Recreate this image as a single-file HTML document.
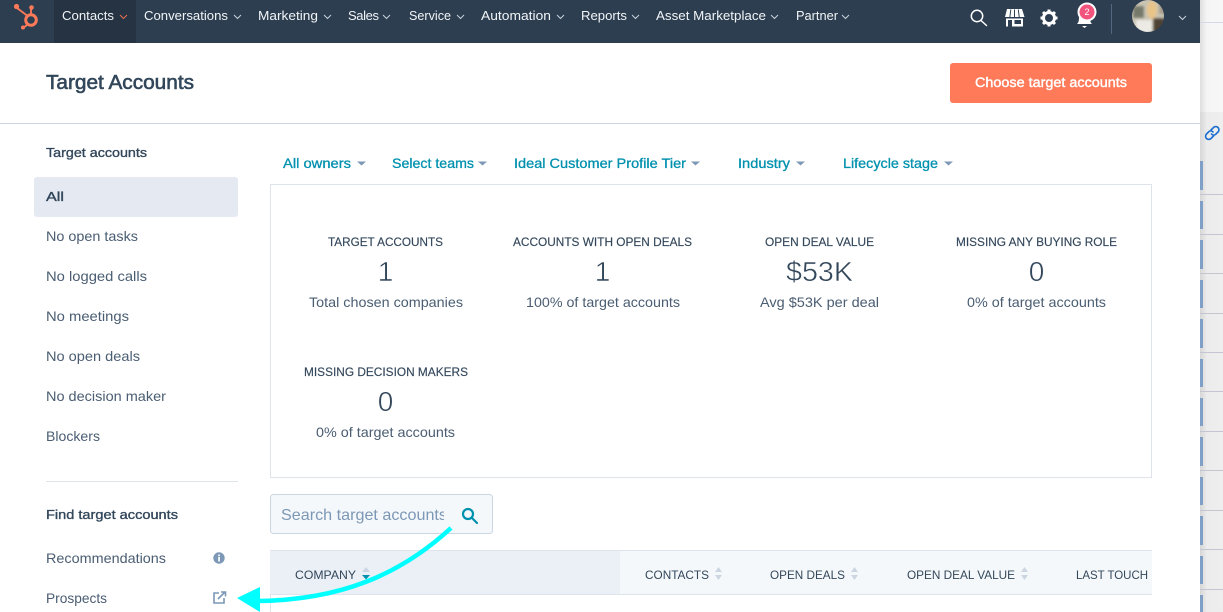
<!DOCTYPE html>
<html><head><meta charset="utf-8"><title>Target Accounts</title>
<style>
html,body{margin:0;padding:0;background:#fff;width:1223px;height:612px;overflow:hidden}
svg{display:block;position:absolute;left:0;top:0}
text{font-family:"Liberation Sans",sans-serif}
.n{fill:#f1f4f7;font-size:13px}
.c{fill:none;stroke:#c8d2dc;stroke-width:1}
.s{fill:#4a5d72;font-size:14px}
.h{fill:#33475b;font-size:13px;stroke:#33475b;stroke-width:.35}
.f{fill:#0091ae;font-size:14px;stroke:#0091ae;stroke-width:.3}
.t{fill:#33475b;font-size:12px;stroke:#33475b;stroke-width:.15}
.m{fill:#33475b;font-size:28px;text-anchor:middle;stroke:#fff;stroke-width:.5}
.d{fill:#4a5d72;font-size:14px}
.th{fill:#33475b;font-size:12px}
</style></head><body>
<svg width="1223" height="612" viewBox="0 0 1223 612" xmlns="http://www.w3.org/2000/svg">
<defs>
<linearGradient id="sh" x1="0" x2="1" y1="0" y2="0"><stop offset="0" stop-color="#d6d6d6"/><stop offset=".3" stop-color="#ececec"/><stop offset="1" stop-color="#eeeeee"/></linearGradient>
<linearGradient id="sh2" x1="0" x2="1" y1="0" y2="0"><stop offset="0" stop-color="#dedede"/><stop offset=".3" stop-color="#f5f5f5"/><stop offset="1" stop-color="#f7f7f7"/></linearGradient>
<filter id="bl" x="-10%" y="-10%" width="120%" height="120%"><feGaussianBlur stdDeviation="1.200"/></filter>
<clipPath id="av"><circle cx="1148" cy="16" r="16"/></clipPath>
<clipPath id="sc"><rect x="270" y="494" width="174" height="40"/></clipPath>
</defs>
<rect width="1223" height="612" fill="#fff"/>
<!-- right strip -->
<rect x="1200" y="0" width="23" height="612" fill="url(#sh)"/>
<rect x="1200" y="0" width="23" height="112" fill="url(#sh2)"/>
<rect x="1200" y="22" width="23" height="1" fill="#d3d9e6"/>
<rect x="1200" y="113" width="23" height="44" fill="url(#sh)"/>
<g fill="#c5c5d2"><rect x="1200" y="194" width="23" height="1"/><rect x="1200" y="234" width="23" height="1"/><rect x="1200" y="273" width="23" height="1"/><rect x="1200" y="313" width="23" height="1"/><rect x="1200" y="352" width="23" height="1"/><rect x="1200" y="391" width="23" height="1"/><rect x="1200" y="431" width="23" height="1"/><rect x="1200" y="470" width="23" height="1"/><rect x="1200" y="510" width="23" height="1"/><rect x="1200" y="549" width="23" height="1"/><rect x="1200" y="589" width="23" height="1"/></g>
<g fill="#7f9fc6"><rect x="1200" y="161" width="3" height="29"/><rect x="1200" y="201" width="3" height="28"/><rect x="1200" y="240" width="3" height="29"/><rect x="1200" y="280" width="3" height="28"/><rect x="1200" y="319" width="3" height="29"/><rect x="1200" y="359" width="3" height="28"/><rect x="1200" y="398" width="3" height="28"/><rect x="1200" y="437" width="3" height="29"/><rect x="1200" y="477" width="3" height="28"/><rect x="1200" y="516" width="3" height="29"/><rect x="1200" y="556" width="3" height="28"/><rect x="1200" y="595" width="3" height="17"/></g>
<g fill="none" stroke="#1a6fd0" stroke-width="1.600" stroke-linecap="round"><path d="M1211 130l2.500-2.500a3 3 0 0 1 4.500 4.500l-2.500 2.500a3 3 0 0 1-4-.5"/><path d="M1213.500 136l-2.500 2.500a3 3 0 0 1-4.500-4.500l2.500-2.500a3 3 0 0 1 4 .5"/></g>
<!-- nav -->
<rect width="1200" height="43" fill="#2d3e50"/>
<rect x="54" width="82" height="43" fill="#253342"/>
<g stroke="#ff7a59" fill="#ff7a59">
<circle cx="31" cy="20" r="5.300" fill="none" stroke-width="3"/>
<path d="M31 8v6M17 8l10 7.500M27 25l-4 3" stroke-width="1.800" fill="none"/>
<circle cx="31.500" cy="7.500" r="2.300" stroke="none"/><circle cx="16.500" cy="6.500" r="2.600" stroke="none"/><circle cx="23" cy="27.500" r="2" stroke="none"/></g>
<text class="n" x="62" y="20" textLength="52" lengthAdjust="spacingAndGlyphs">Contacts</text>
<text class="n" x="144" y="20" textLength="84" lengthAdjust="spacingAndGlyphs">Conversations</text>
<text class="n" x="258" y="20" textLength="60" lengthAdjust="spacingAndGlyphs">Marketing</text>
<text class="n" x="348" y="20" textLength="31" lengthAdjust="spacing">Sales</text>
<text class="n" x="409" y="20" textLength="42" lengthAdjust="spacingAndGlyphs">Service</text>
<text class="n" x="481" y="20" textLength="70" lengthAdjust="spacingAndGlyphs">Automation</text>
<text class="n" x="581" y="20" textLength="46" lengthAdjust="spacingAndGlyphs">Reports</text>
<text class="n" x="656" y="20" textLength="110" lengthAdjust="spacingAndGlyphs">Asset Marketplace</text>
<text class="n" x="796" y="20" textLength="42" lengthAdjust="spacingAndGlyphs">Partner</text>
<path d="M120 15l3.500 3.500 3.500-3.500" fill="none" stroke="#e66e50"/>
<path class="c" d="M234 15l3.500 3.500 3.500-3.500M324 15l3.500 3.500 3.500-3.500M383 15l3.500 3.500 3.500-3.500M457 15l3.500 3.500 3.500-3.500M557 15l3.500 3.500 3.500-3.500M632 15l3.500 3.500 3.500-3.500M771 15l3.500 3.500 3.500-3.500M842 15l3.500 3.500 3.500-3.500M1179 16l3.500 3.500 3.500-3.500"/>
<!-- top right icons -->
<g fill="none" stroke="#fff" stroke-width="1.500"><circle cx="977" cy="16" r="5.700"/><path d="M981 20.500l5.500 5" stroke-linecap="round"/></g>
<g fill="#fff"><path d="M1007 9h15l2.500 8h-19.500z"/><path d="M1006 18.500h17v8h-17z"/></g>
<path d="M1010.800 9.500l-1 8M1014.500 9.500v8M1018.300 9.500l1 8" stroke="#2d3e50" stroke-width="1" fill="none"/>
<rect x="1008" y="20" width="4" height="6.500" fill="#2d3e50"/><rect x="1014.500" y="20" width="6.500" height="4" fill="#2d3e50"/>
<g fill="none" stroke="#fff"><circle cx="1049" cy="18" r="5.500" stroke-width="3"/><path d="M1049 9.500v3M1049 23.500v3M1040.500 18h3M1054.500 18h3M1043 12l2 2M1053 22l2 2M1055 12l-2 2M1045 22l-2 2" stroke-width="3"/></g>
<path d="M1077 24c2-2 2-4 2-8a5.500 5.500 0 0 1 11 0c0 4 0 6 2 8z" fill="#fff"/><path d="M1082 26h5l-2.500 2z" fill="#fff"/>
<circle cx="1087" cy="12" r="9.500" fill="#fff"/><circle cx="1087" cy="12" r="7.500" fill="#f2547d"/>
<text x="1087" y="15" font-size="9" fill="#fff" text-anchor="middle">2</text>
<rect x="1111" y="4" width="1" height="30" fill="#52677f"/>
<g clip-path="url(#av)"><g filter="url(#bl)"><rect x="1130" y="-2" width="36" height="36" fill="#c9c4b4"/><rect x="1133" y="6" width="11" height="12" fill="#75796a"/><rect x="1136" y="20" width="16" height="13" fill="#eceae4"/><rect x="1153" y="18" width="12" height="15" fill="#4f4235"/><ellipse cx="1152" cy="10" rx="5" ry="9" fill="#e8c489"/><rect x="1159" y="2" width="6" height="12" fill="#a89d8c"/></g></g>
<!-- header -->
<text x="46" y="89" font-size="20" fill="#33475b" stroke="#33475b" stroke-width=".6" textLength="148" lengthAdjust="spacingAndGlyphs">Target Accounts</text>
<rect x="950" y="63" width="202" height="40" rx="3" fill="#ff7a59"/>
<text x="975" y="87" font-size="13.500" fill="#fff" stroke="#fff" stroke-width=".4" textLength="152" lengthAdjust="spacingAndGlyphs">Choose target accounts</text>
<rect x="0" y="123" width="1200" height="1" fill="#cbd6e2"/>
<!-- sidebar -->
<text class="h" x="46" y="157" textLength="101" lengthAdjust="spacingAndGlyphs">Target accounts</text>
<rect x="34" y="177" width="204" height="40" rx="3" fill="#e5eaf2"/>
<text class="h" x="46" y="201" font-size="14" textLength="18" lengthAdjust="spacingAndGlyphs">All</text>
<text class="s" x="46" y="241" textLength="92" lengthAdjust="spacingAndGlyphs">No open tasks</text>
<text class="s" x="46" y="281" textLength="101" lengthAdjust="spacingAndGlyphs">No logged calls</text>
<text class="s" x="46" y="321" textLength="83" lengthAdjust="spacingAndGlyphs">No meetings</text>
<text class="s" x="46" y="361" textLength="94" lengthAdjust="spacingAndGlyphs">No open deals</text>
<text class="s" x="46" y="401" textLength="120" lengthAdjust="spacingAndGlyphs">No decision maker</text>
<text class="s" x="46" y="441" textLength="54" lengthAdjust="spacingAndGlyphs">Blockers</text>
<rect x="46" y="481" width="192" height="1" fill="#dfe3eb"/>
<text class="h" x="46" y="519" textLength="132" lengthAdjust="spacingAndGlyphs">Find target accounts</text>
<text class="s" x="46" y="563" textLength="120" lengthAdjust="spacingAndGlyphs">Recommendations</text>
<text class="s" x="46" y="603" textLength="61" lengthAdjust="spacingAndGlyphs">Prospects</text>
<circle cx="219" cy="558" r="5.700" fill="#7c98b6"/><rect x="218.200" y="557" width="1.700" height="4.500" fill="#fff"/><rect x="218.200" y="554.500" width="1.700" height="1.700" fill="#fff"/>
<g fill="none" stroke="#7c98b6" stroke-width="1.600"><path d="M219 593h-5v10h10v-5"/><path d="M218 599l7-7M221 592h4.500v4.500"/></g>
<!-- filters -->
<text class="f" x="283" y="168" textLength="68" lengthAdjust="spacingAndGlyphs">All owners</text>
<text class="f" x="392" y="168" textLength="82" lengthAdjust="spacingAndGlyphs">Select teams</text>
<text class="f" x="514" y="168" textLength="172" lengthAdjust="spacingAndGlyphs">Ideal Customer Profile Tier</text>
<text class="f" x="738" y="168" textLength="52" lengthAdjust="spacingAndGlyphs">Industry</text>
<text class="f" x="843" y="168" textLength="95" lengthAdjust="spacingAndGlyphs">Lifecycle stage</text>
<path fill="#7c98b6" d="M357 161.500h9l-4.500 4zM478 161.500h9l-4.500 4zM691 161.500h9l-4.500 4zM796 161.500h9l-4.500 4zM944 161.500h9l-4.500 4z"/>
<!-- stats box -->
<rect x="270.500" y="184.500" width="881" height="293" fill="#fff" stroke="#dfe3eb"/>
<text class="t" x="328" y="246" textLength="115" lengthAdjust="spacingAndGlyphs">TARGET ACCOUNTS</text>
<text class="m" x="385.500" y="281">1</text>
<text class="d" x="309" y="307" textLength="154" lengthAdjust="spacingAndGlyphs">Total chosen companies</text>
<text class="t" x="513" y="246" textLength="179" lengthAdjust="spacingAndGlyphs">ACCOUNTS WITH OPEN DEALS</text>
<text class="m" x="602.500" y="281">1</text>
<text class="d" x="526" y="307" textLength="154" lengthAdjust="spacingAndGlyphs">100% of target accounts</text>
<text class="t" x="765" y="246" textLength="109" lengthAdjust="spacingAndGlyphs">OPEN DEAL VALUE</text>
<text class="m" x="786" y="281" style="text-anchor:start" textLength="67" lengthAdjust="spacingAndGlyphs">$53K</text>
<text class="d" x="760" y="307" textLength="119" lengthAdjust="spacingAndGlyphs">Avg $53K per deal</text>
<text class="t" x="956" y="246" textLength="161" lengthAdjust="spacingAndGlyphs">MISSING ANY BUYING ROLE</text>
<text class="m" x="1036.500" y="281">0</text>
<text class="d" x="967" y="307" textLength="139" lengthAdjust="spacingAndGlyphs">0% of target accounts</text>
<text class="t" x="304" y="376" textLength="164" lengthAdjust="spacingAndGlyphs">MISSING DECISION MAKERS</text>
<text class="m" x="385.500" y="411">0</text>
<text class="d" x="316" y="437" textLength="139" lengthAdjust="spacingAndGlyphs">0% of target accounts</text>
<!-- search -->
<rect x="270.500" y="494.500" width="222" height="39" rx="3" fill="#f5f8fa" stroke="#cbd6e2"/>
<g clip-path="url(#sc)"><text x="281" y="520" font-size="16" fill="#7c98b6" textLength="166" lengthAdjust="spacingAndGlyphs">Search target accounts</text></g>
<g fill="none" stroke="#0091ae" stroke-width="2.200"><circle cx="468" cy="514" r="5"/><path d="M472 518l5 5" stroke-linecap="round"/></g>
<!-- table head -->
<rect x="270" y="550" width="882" height="45" fill="#f5f8fa"/>
<rect x="270" y="550" width="350" height="45" fill="#eaf0f6"/>
<rect x="270" y="550" width="882" height="1" fill="#dfe3eb"/>
<rect x="270" y="594" width="882" height="1" fill="#dfe3eb"/>
<rect x="270" y="595" width="1" height="17" fill="#dfe3eb"/>
<text class="th" x="295" y="579" textLength="61" lengthAdjust="spacingAndGlyphs">COMPANY</text>
<text class="th" x="645" y="579" textLength="64" lengthAdjust="spacingAndGlyphs">CONTACTS</text>
<text class="th" x="770" y="579" textLength="75" lengthAdjust="spacingAndGlyphs">OPEN DEALS</text>
<text class="th" x="907" y="579" textLength="108" lengthAdjust="spacingAndGlyphs">OPEN DEAL VALUE</text>
<text class="th" x="1076" y="579" textLength="72" lengthAdjust="spacingAndGlyphs">LAST TOUCH</text>
<path fill="#cbd6e2" d="M362 572l4-5 4 5zM715 572l3.500-5 3.500 5zM715 575l3.500 5 3.500-5zM851 572l3.500-5 3.500 5zM851 575l3.500 5 3.500-5zM1021 572l3.500-5 3.500 5zM1021 575l3.500 5 3.500-5z"/>
<path fill="#0091ae" d="M362 575l4 4.500 4-4.500z"/>
<!-- arrow -->
<path d="M451 528C400 575 340 600 258 601" fill="none" stroke="#00ffff" stroke-width="4.500"/>
<path d="M237 598L260 587L260 612z" fill="#00ffff"/>
</svg>
</body></html>
